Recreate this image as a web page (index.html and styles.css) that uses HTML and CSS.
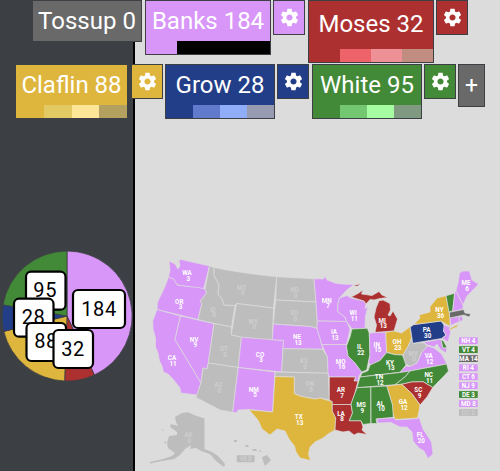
FILE: index.html
```html
<!DOCTYPE html>
<html lang="en">
<head>
    <meta charset="UTF-8">
    <meta name="viewport" content="width=device-width, initial-scale=1.0">
    <title>Electoral Map</title>
    <link rel="stylesheet" href="styles.css">
</head>
<body>

<svg class="defs" width="0" height="0">
    <symbol id="gear" viewBox="0 0 24 24">
        <path d="M19.43 12.98c.04-.32.07-.64.07-.98s-.03-.66-.07-.98l2.11-1.65c.19-.15.24-.42.12-.64l-2-3.46c-.12-.22-.39-.3-.61-.22l-2.49 1c-.52-.4-1.08-.73-1.69-.98l-.38-2.65C14.46 2.18 14.25 2 14 2h-4c-.25 0-.46.18-.49.42l-.38 2.65c-.61.25-1.17.59-1.69.98l-2.49-1c-.23-.09-.49 0-.61.22l-2 3.46c-.13.22-.07.49.12.64l2.11 1.65c-.04.32-.07.65-.07.98s.03.66.07.98l-2.11 1.65c-.19.15-.24.42-.12.64l2 3.46c.12.22.39.3.61.22l2.49-1c.52.4 1.08.73 1.69.98l.38 2.65c.03.24.24.42.49.42h4c.25 0 .46-.18.49-.42l.38-2.65c.61-.25 1.17-.59 1.69-.98l2.49 1c.23.09.49 0 .61-.22l2-3.46c.12-.22.07-.49-.12-.64l-2.11-1.65zM12 15.5c-1.93 0-3.5-1.57-3.5-3.5s1.57-3.5 3.5-3.5 3.5 1.57 3.5 3.5-1.57 3.5-3.5 3.5z"/>
    </symbol>
</svg>

<div class="legend">
    <div class="legend-row first">
        <div class="party tossup"><span class="name">Tossup 0</span></div>
        <div class="party banks">
            <span class="name">Banks 184</span>
            <div class="shades"><i></i><i></i><i></i><i></i></div>
        </div>
        <button class="settings banks"><svg><use href="#gear"/></svg></button>
        <div class="party moses">
            <span class="name">Moses 32</span>
            <div class="shades"><i></i><i></i><i></i><i></i></div>
        </div>
        <button class="settings moses"><svg><use href="#gear"/></svg></button>
    </div>
    <div class="legend-row second">
        <div class="party claflin">
            <span class="name">Claflin 88</span>
            <div class="shades"><i></i><i></i><i></i><i></i></div>
        </div>
        <button class="settings claflin"><svg><use href="#gear"/></svg></button>
        <div class="party grow">
            <span class="name">Grow 28</span>
            <div class="shades"><i></i><i></i><i></i><i></i></div>
        </div>
        <button class="settings grow"><svg><use href="#gear"/></svg></button>
        <div class="party white">
            <span class="name">White 95</span>
            <div class="shades"><i></i><i></i><i></i><i></i></div>
        </div>
        <button class="settings white"><svg><use href="#gear"/></svg></button>
        <button class="add">+</button>
    </div>
</div>

<div class="application">
    <div class="sidebar">
        <svg class="chart" viewBox="0 0 133 132">
            <g class="slices">
                <path class="f-banks" d="M67 66V1A65 65 0 0 1 94.4 125z"/>
                <path class="f-moses" d="M67 66L94.4 125A65 65 0 0 1 64.6 131z"/>
                <path class="f-claflin" d="M67 66L64.6 131A65 65 0 0 1 3.8 81.4z"/>
                <path class="f-grow" d="M67 66L3.8 81.4A65 65 0 0 1 3 54.8z"/>
                <path class="f-white" d="M67 66L3 54.8A65 65 0 0 1 67 1z"/>
            </g>
            <g class="counts">
                <rect x="26" y="21.7" width="39.5" height="38" rx="5"/><text x="45.2" y="47">95</text>
                <rect x="14" y="48.7" width="39.5" height="38" rx="5"/><text x="33.6" y="74">28</text>
                <rect x="26.5" y="73" width="39.5" height="38" rx="5"/><text x="46" y="98.3">88</text>
                <rect x="73" y="40" width="52" height="38" rx="5"/><text x="99" y="65.5">184</text>
                <rect x="53.5" y="80" width="39.5" height="38" rx="5"/><text x="73" y="105.7">32</text>
            </g>
        </svg>
    </div>

    <div class="map">
        <svg viewBox="135 240 365 231">
            <g class="states">
                <!-- west -->
                <path class="f-banks" d="M169 261L175 264 178 269 180 266 179 260 181 259.5 209.5 266 203.5 289 188 286.5 177 285 174 279.5 168.5 277 170 270z"/>
                <path class="f-banks" d="M168.5 277L174 279.5 177 285 188 286.5 198 287.5 205.5 289 206.5 293 200 301.5 202 303 198 319.5 157 309.5 157.5 302 162 293 166 284z"/>
                <path class="f-banks" d="M157 309.5L180.5 316 175 339.5 201 383 199.5 387 197.3 395 180.7 393 180 388 173 379 168 374 163.5 372 162 366 159.5 361 158 353 155.5 347 155.5 338 153 329 152.7 321z"/>
                <path class="f-banks" d="M180.5 316L214 323.5 208.3 363 207 369 203 368 201 383 175 339.5z"/>
                <path class="f-tossup" d="M209.5 266L214 267.5 214 275 219 285 218 294 222 299 224 305 235 305.5 231.5 327 214 323.5 198 319.5 202 303 200 301.5 206.5 293 205 289z"/>
                <path class="f-tossup" d="M214 267.5Q240 273 276.7 276.7L273.5 308 236.5 303.5 235 305.5 224 305 222 299 218 294 219 285 214 275z"/>
                <path class="f-tossup" d="M236.5 303.5L273.5 308 272.3 340.5 241.5 337.3 231.2 335z"/>
                <path class="f-tossup" d="M214 323.5L231.5 327 231.2 335 241.5 337.3 238.2 367.5 208.3 363z"/>
                <path class="f-tossup" d="M208.3 363L238.2 367.5 232.7 412.3 220 410 196 397.5 199.5 387 201 383 203 368 207 369z"/>
                <path class="f-banks" d="M241.5 337.3L283.5 340.5 281.7 372 238.2 367.5z"/>
                <path class="f-banks" d="M238.2 367.5L275 372 272.7 412 249 409.5 238 410 237 412.7 232.7 412.3z"/>
                <!-- plains -->
                <path class="f-tossup" d="M276.7 276.7L314 278.7 316 302 275.7 300z"/>
                <path class="f-tossup" d="M275.7 300L316 302 317.3 321 317 328.5 310 326.5 273.3 324z"/>
                <path class="f-banks" d="M273.3 324L310 326.5 317 328.5 320 338 322.7 349.3 283 348.7 283.5 340.5 272.3 339.7z"/>
                <path class="f-tossup" d="M283 348.7L322.7 349.3 325 353 327.5 357 328.3 373.3 281.7 372z"/>
                <path class="f-tossup" d="M275 372L328.3 373.3 329.3 400 320 398 315 399 306.7 397.5 300 396 294.3 393.5 294.3 377 275 376.5z"/>
                <path class="f-claflin" d="M275 376.5L294.3 377 294.3 393.5 300 396 306.7 397.5 315 399 320 398 332.3 401.7 332.3 410 335.7 418 335 430 328 434 323 438 315 442 310 447 308.5 454 310.5 460.5 300 458 296 452 294.5 446 289 439 285 431 277 429 270 435 262 429 258 420 249 409.8 272.7 412z"/>
                <path class="f-banks" d="M314 278.7L323.5 279 325 276 327 280 335 283 341 284 354 284.5 346.7 290 339.5 298 337.7 305 338 312 345 317 346.7 321.5 317.3 321 316 302z"/>
                <path class="f-banks" d="M317.3 321L346.7 321.5 350 329 348 338 346.5 344.5 321.7 344.5 320 338 317 328.5z"/>
                <path class="f-banks" d="M321.7 344.5L346.5 344.5 348 356 355 363 361.7 372 359 376 358 381 354 381 355.5 377 329.3 377 328 373 327.5 357z"/>
                <path class="f-moses" d="M329.3 377L355.5 377 354 381 358 381 355 393 351 404.5 332.3 404.5 332.3 401.7 329.3 400z"/>
                <path class="f-moses" d="M332.3 404.5L351 404.5 352.5 413 349.3 420.7 361 420.7 363 427 362 430 367 434.5 358 433 354 435 349 431 343 432 335 430 335.7 418 332.3 411z"/>
                <!-- great lakes -->
                <path class="f-banks" d="M339.5 298L347 295.5 351 298 364 301 366 304 365 309 368 306 365.5 316 365 328.5 352 329 346.7 321.5 345 317 338 312 337.7 305z"/>
                <path class="f-moses" d="M351 297L358 293.5 363 290 361.5 294 372 295.5 379 291.5 382 295 388 297.5 380 298.5 374 300 370 299.5 366 304 364 301z"/>
                <path class="f-moses" d="M379 300.7L383 300 390 303.5 390.5 310 388 315 390 316 393 311 397.5 319 394 331 375 332.5 376.5 325 374 317 376 308z"/>
                <path class="f-white" d="M352 329L367.3 328.3 369.3 333.3 370 355 368 363.5 366.7 370 361.7 372 355 363 348 356 346.5 346 350 337z"/>
                <path class="f-banks" d="M369.3 333.3L375 332.5 385.7 332.2 386.7 352.5 380 360.5 371 365 368.5 363 370 355z"/>
                <path class="f-claflin" d="M385.7 332.2L394 331 401.7 333 410 326.7 411.7 339 408 346.7 403 355 395 354.7 386.7 352z"/>
                <!-- south -->
                <path class="f-tossup" d="M411.5 338L412.7 343.3 423 342.5 427.5 346 422 352 417 363 410 366.5 405 363.5 403 355 408 346.7z"/>
                <path class="f-banks" d="M427.5 346L434 348 441.7 354 446.7 364 410 371 400 372.5 406 366 410 366.5 417 363 422 352z"/>
                <path class="f-white" d="M361.7 373.3L368 370.7 370 365 380 360.5 386.7 352.5 395 354.7 402.5 355 406 365 400 372.2 360.5 377z"/>
                <path class="f-white" d="M360 377L400 372.5 410 371 405 377 395 384.7 357 387.7z"/>
                <path class="f-white" d="M410 371L446.7 364 448.5 371 443 377 438 382 432.7 387.5 423 381.7 411.7 382 401.7 384.3 395 384.7 405 377z"/>
                <path class="f-moses" d="M401.7 384.3L411.7 382 423 381.7 432.7 387.5 427 397 420 405 411.7 393.5z"/>
                <path class="f-claflin" d="M386.7 386L401.7 384.3 411.7 393.5 420 405 419 411 417.5 418 395 419.5 392 411 392.5 405z"/>
                <path class="f-white" d="M370.7 387L386.7 386 392.5 405 393.3 417.5 376 419 377 423.5 371 423.5z"/>
                <path class="f-white" d="M357 387.7L370.7 387 370.7 423.5 363 424.5 361 420.7 349.3 420.7 352.5 413 351 404 355 393z"/>
                <path class="f-banks" d="M376.5 419L393.3 417.7 396 420 417.5 418.5 419 417 423 429 431.5 442 433 454 428 458.5 424 451 419 448 413 441 412 432 407 427 400 427 391 422.5 378 423z"/>
                <!-- north east -->
                <path class="f-banks" d="M423 342.5L441 339 443 348 447 347.5 446 353 440 349 437 344 434 347 427.5 345z"/>
                <path class="f-white" d="M441 339.5L443.5 341 447 347.5 443 348z"/>
                <path class="f-grow" d="M410.3 327L414 324.5 441 321 445 326.5 443.5 331 446 335 441.5 338.5 412.7 343.3z"/>
                <path class="f-banks" d="M444 325L450 327 450.5 333 448 342 442.5 338.5 446 335 443.5 331z"/>
                <path class="f-claflin" d="M414 324.5L420 318 419 315 430 312 430 306.7 437 298 446 295.7 448 306 450 316.7 450 326.5 441 321z"/>
                <path class="f-claflin" d="M449 329L458.5 324 457 327 450 330z"/>
                <path class="f-white" d="M446 295.7L454.7 293.3 452.7 311 449 312z"/>
                <path class="f-banks" d="M454.7 293L456 290.5 463 305 463 309 452.7 311.5z"/>
                <path class="f-banks" d="M456 290.5L458 283 459.5 273 463 271 469.5 271 472 280 478.5 284 473 290 467 296 463 305z"/>
                <path class="f-banks" d="M450 317.5L459 316.5 459.5 321.5 450.5 325.5z"/>
                <path class="f-banks" d="M459 316.5L462 316 463 320 459.5 322z"/>
                <path class="f-ma" d="M449.5 312.3L463.5 309.5 465 313 471 314 469 317 464 315 449.7 318z"/>
                <!-- alaska and hawaii -->
                <path class="f-tossup flat" d="M175 417L182 413 188 412.3 194 415 204.5 418.5 204.5 449 212 452 218 456 225 464 224 467 216 461 210 454 201 451 196 448 190 449 191 445 185 449 180 455 174 459 162 461 150 463.5 150 462 163 459 172 456 175 453 168 448 167 443 169 436 177 435 177 432 170 427 171 424 178 426 176 422z"/>
                <path class="f-tossup flat" d="M262 457L267 455 271 460 265 466 263 461zM259 450L262 451 260 452zM252 449L256 449 257 451 253 451zM245 445L248 445 249 447 246 447zM234 440L237 440 237 442 234 442zM161 429L164 430 164 431zM164 442L166 441 166 444z"/>
                <path class="f-moses flat" d="M354 286L360 284 357 286z"/>
            </g>
            <rect class="hawaii" x="236.7" y="455.3" width="18" height="7" rx=".7"/>
            <g class="labels">
                <text x="187" y="275.2">WA<tspan x="188.3" dy="5.6">3</tspan></text>
                <text x="179.3" y="303.8">OR<tspan x="180.5" dy="5.6">3</tspan></text>
                <text x="172" y="360">CA<tspan x="173" dy="5.6">11</tspan></text>
                <text x="194" y="341.8">NV<tspan x="195.3" dy="5.6">9</tspan></text>
                <text x="260" y="356.5">CO<tspan x="261" dy="5.6">3</tspan></text>
                <text x="253.7" y="391.8">NM<tspan x="255" dy="5.6">5</tspan></text>
                <text x="297" y="339">NE<tspan x="298" dy="5.6">13</tspan></text>
                <text x="326.7" y="302.5">MN<tspan x="328" dy="5.6">7</tspan></text>
                <text x="334" y="334.3">IA<tspan x="335" dy="5.6">13</tspan></text>
                <text x="340.7" y="363.8">MO<tspan x="341.7" dy="5.6">16</tspan></text>
                <text x="353.3" y="315">WI<tspan x="354.3" dy="5.6">11</tspan></text>
                <text x="376.7" y="346.8">IN<tspan x="377.8" dy="5.6">15</tspan></text>
                <text x="382.3" y="322.5">MI<tspan x="383.3" dy="5.6">13</tspan></text>
                <text x="359.7" y="349.3">IL<tspan x="360.8" dy="5.6">22</tspan></text>
                <text x="397" y="344">OH<tspan x="397.8" dy="5.6">23</tspan></text>
                <text x="426.7" y="332.3">PA<tspan x="427.7" dy="5.6">30</tspan></text>
                <text x="439.5" y="312">NY<tspan x="440.5" dy="5.6">36</tspan></text>
                <text x="466" y="285.3">ME<tspan x="467" dy="5.6">6</tspan></text>
                <text x="428.7" y="358.3">VA<tspan x="429.7" dy="5.6">12</tspan></text>
                <text x="390" y="364.5">KY<tspan x="391" dy="5.6">13</tspan></text>
                <text x="379" y="379.3">TN<tspan x="380" dy="5.6">12</tspan></text>
                <text x="428.7" y="377">NC<tspan x="429.5" dy="5.6">11</tspan></text>
                <text x="418.3" y="392.3">SC<tspan x="419.5" dy="5.6">9</tspan></text>
                <text x="403" y="404.3">GA<tspan x="404" dy="5.6">12</tspan></text>
                <text x="380.3" y="405.8">AL<tspan x="381.3" dy="5.6">10</tspan></text>
                <text x="361.3" y="407">MS<tspan x="362.3" dy="5.6">9</tspan></text>
                <text x="341" y="392">AR<tspan x="342" dy="5.6">7</tspan></text>
                <text x="341" y="415.8">LA<tspan x="342" dy="5.6">8</tspan></text>
                <text x="298.7" y="419.3">TX<tspan x="299.7" dy="5.6">13</tspan></text>
                <text x="420.3" y="437.3">FL<tspan x="421.3" dy="5.6">20</tspan></text>
            </g>
            <g class="labels faded">
                <text x="241.7" y="289.5">MT<tspan x="242.8" dy="5.6">0</tspan></text>
                <text x="213" y="311.5">ID<tspan x="214" dy="5.6">0</tspan></text>
                <text x="253.3" y="323.5">WY<tspan x="254.3" dy="5.6">0</tspan></text>
                <text x="224" y="351">UT<tspan x="225" dy="5.6">0</tspan></text>
                <text x="218.3" y="387">AZ<tspan x="219.3" dy="5.6">0</tspan></text>
                <text x="294.5" y="292">ND<tspan x="295.5" dy="5.6">0</tspan></text>
                <text x="294.3" y="315">SD<tspan x="295.3" dy="5.6">0</tspan></text>
                <text x="304" y="363">KS<tspan x="305" dy="5.6">0</tspan></text>
                <text x="310" y="386">OK<tspan x="311" dy="5.6">0</tspan></text>
                <text x="413" y="355.5">WV<tspan x="414" dy="5.6">0</tspan></text>
                <text x="188.3" y="437">AK<tspan x="189.3" dy="5.6">0</tspan></text>
                <text x="246" y="461">HI 0</text>
            </g>
            <g class="small-states">
                <rect class="f-banks" x="459" y="337.3" width="18.7" height="6.8"/><text x="468.4" y="343.1">NH 4</text>
                <rect class="f-white" x="459" y="346.2" width="18.7" height="6.8"/><text x="468.4" y="352">VT 4</text>
                <rect class="f-ma" x="459" y="355.2" width="18.7" height="6.8"/><text x="468.4" y="361">MA 14</text>
                <rect class="f-banks" x="459" y="364.4" width="18.7" height="6.8"/><text x="468.4" y="370.2">RI 4</text>
                <rect class="f-banks" x="459" y="373.3" width="18.7" height="6.8"/><text x="468.4" y="379.1">CT 6</text>
                <rect class="f-banks" x="459" y="382.2" width="18.7" height="6.8"/><text x="468.4" y="388">NJ 9</text>
                <rect class="f-white" x="459" y="391.1" width="18.7" height="6.8"/><text x="468.4" y="396.9">DE 3</text>
                <rect class="f-banks" x="459" y="400.2" width="18.7" height="6.8"/><text x="468.4" y="406">MD 8</text>
                <rect class="f-tossup" x="459" y="409.1" width="18.7" height="6.8"/><text class="dim" x="468.4" y="414.9">DC 0</text>
            </g>
        </svg>
    </div>
</div>

</body>
</html>
```
FILE: styles.css
```css
* {
    box-sizing: border-box;
}

body {
    margin: 0;
    height: 471px;
    overflow: hidden;
    background-color: #dcdcdc;
    font-family: Roboto, sans-serif;
}

svg {
    display: block;
}

.defs {
    position: absolute;
}

.application {
    display: flex;
    height: 471px;
}

.sidebar {
    width: 135px;
    flex: none;
    padding-top: 250px;
    background-color: #3c3f43;
    border-right: 2px solid #000;
}

.chart {
    width: 133px;
    height: 132px;
}

.map {
    flex: 1;
    display: flex;
    align-items: flex-end;
}

.map svg {
    width: 365px;
    height: 231px;
}

/* legend floats over the sidebar and the map */
.legend {
    position: absolute;
    top: 0;
    left: 0;
    width: 500px;
}

.legend-row {
    display: flex;
    align-items: flex-start;
}

.legend-row.first {
    height: 64px;
    padding-left: 32px;
}

.legend-row.second {
    padding-left: 15px;
}

.party {
    width: 110px;
    height: 55px;
    border: 1px solid #3c3f43;
    color: #fff;
    display: flex;
    flex-direction: column;
    justify-content: space-between;
}

.name {
    height: 40px;
    line-height: 40px;
    font-size: 24px;
    text-align: center;
    white-space: nowrap;
}

.shades {
    display: flex;
    height: 13px;
}

.shades i {
    flex: 1;
}

.settings, .add {
    width: 32px;
    height: 35px;
    padding: 0;
    border: 1px solid #3c3f43;
    color: #fff;
    font-family: Roboto, sans-serif;
}

.settings svg {
    width: 21px;
    height: 21px;
    margin: -1px auto 0;
    fill: #fff;
}

.add {
    width: 27px;
    height: 43px;
    margin-left: 2px;
    background-color: #696969;
    font-size: 23px;
}

.tossup {
    height: 42px;
    background-color: #696969;
    margin-right: 3px;
}

.banks { background-color: #d796f8; }
.moses { background-color: #ad3030; }
.claflin { background-color: #dfb63d; }
.grow { background-color: #233e88; }
.white { background-color: #438a38; }

.party.banks {
    width: 126px;
    margin-right: 2px;
}

.party.moses {
    width: 126px;
    height: 63px;
    margin: 0 2px 0 3px;
}

.party.moses .name {
    line-height: 47px;
}

.party.claflin {
    width: 113px;
    margin-right: 3px;
}

.party.grow {
    margin: 0 2px;
}

.party.white {
    margin: 0 2px 0 3px;
}

.banks i:nth-child(n+2) { background-color: #000; }
.moses i:nth-child(2) { background-color: #ee6369; }
.moses i:nth-child(3) { background-color: #ee9197; }
.moses i:nth-child(4) { background-color: #c08d80; }
.claflin i:nth-child(2) { background-color: #e2c963; }
.claflin i:nth-child(3) { background-color: #fde698; }
.claflin i:nth-child(4) { background-color: #b5a15f; }
.grow i:nth-child(2) { background-color: #617acb; }
.grow i:nth-child(3) { background-color: #90adfa; }
.grow i:nth-child(4) { background-color: #979bb2; }
.white i:nth-child(2) { background-color: #74c771; }
.white i:nth-child(3) { background-color: #a6fda1; }
.white i:nth-child(4) { background-color: #7f9a80; }

.f-banks { fill: #d796f8; }
.f-moses { fill: #ad3030; }
.f-claflin { fill: #dfb63d; }
.f-grow { fill: #233e88; }
.f-white { fill: #438a38; }
.f-tossup { fill: #bdbdbd; }
.f-ma { fill: #696969; }

.slices path {
    stroke: #3c3f43;
    stroke-width: 0.8;
}

.counts rect {
    fill: #fff;
    stroke: #000;
    stroke-width: 2.2;
}

.counts text {
    font-size: 20px;
    letter-spacing: 0.6px;
    text-anchor: middle;
}

.states path {
    stroke: #dcdcdc;
    stroke-width: 0.7;
    stroke-linejoin: round;
}

.states .flat {
    stroke: none;
}

.hawaii {
    fill: #bdbdbd;
}

.labels text, .small-states text {
    font-size: 6.3px;
    font-weight: 700;
    fill: #fff;
    text-anchor: middle;
}

.labels.faded text, .small-states .dim {
    fill: #cecece;
}
```
